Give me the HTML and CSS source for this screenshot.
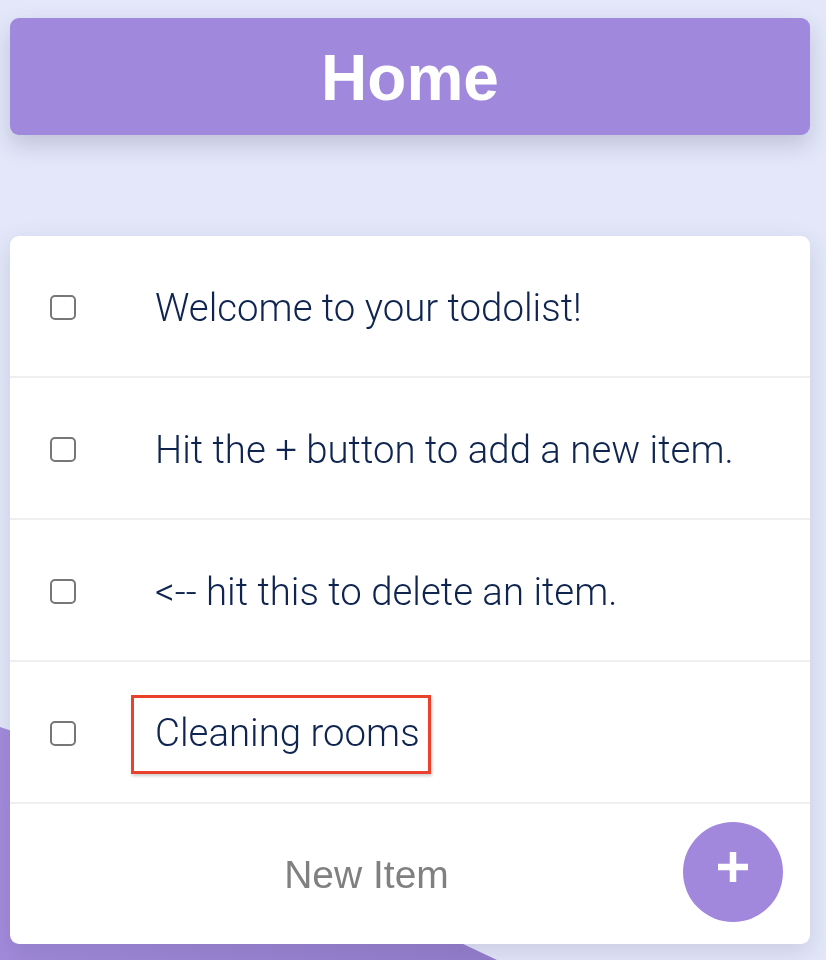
FILE: index.html
```html
<!DOCTYPE html>
<html>
<head>
<meta charset="utf-8">
<link rel="stylesheet" href="styles.css">
</head>
<body>
<div class="bg-shape"></div>
<div class="page">
  <header class="header"><h1 class="title">Home</h1></header>
  <main class="card">
    <div class="row"><span class="check"></span><span class="label">Welcome to your todolist!</span></div>
    <div class="row"><span class="check"></span><span class="label">Hit the + button to add a new item.</span></div>
    <div class="row"><span class="check"></span><span class="label">&lt;-- hit this to delete an item.</span></div>
    <div class="row"><span class="check"></span><span class="label highlight">Cleaning rooms</span></div>
    <div class="footer">
      <div class="new-item">New Item</div>
      <button class="add-btn" aria-label="add">
        <svg width="30" height="30" viewBox="0 0 30 30"><path d="M15 0V30M0 15H30" stroke="#fff" stroke-width="6.5"/></svg>
      </button>
    </div>
  </main>
</div>
</body>
</html>
```
FILE: styles.css
```css
html, body {
  margin: 0;
  padding: 0;
}
body {
  background: #e3e7f9;
  min-height: 960px;
  font-family: "Liberation Sans", Arial, sans-serif;
  overflow: hidden;
}
.bg-shape {
  position: fixed;
  left: 0;
  top: 0;
  width: 826px;
  height: 960px;
  background: linear-gradient(160deg, #a48ddc 0%, #a28bdb 75%, #8b74c3 100%);
  clip-path: polygon(0 727px, 12px 731px, 497px 960px, 0 960px);
  z-index: 0;
}
.page {
  position: relative;
  z-index: 1;
  padding: 18px 16px 0 10px;
  display: flex;
  flex-direction: column;
  gap: 101px;
}
.header {
  height: 117px;
  background: #a088dc;
  border-radius: 9px;
  display: flex;
  align-items: center;
  justify-content: center;
  box-shadow: 0 10px 22px rgba(70, 70, 110, 0.22);
}
.title {
  margin: 0;
  color: #fff;
  font-size: 64px;
  font-weight: 700;
  line-height: 1;
  position: relative;
  top: 1px;
}
.card {
  background: #fff;
  border-radius: 9px;
  box-shadow: 0 8px 24px rgba(70, 70, 110, 0.16);
  display: flex;
  flex-direction: column;
}
.row {
  height: 140px;
  border-bottom: 2px solid #efefef;
  display: flex;
  align-items: center;
  padding-left: 40px;
  gap: 79px;
}
.check {
  width: 22px;
  height: 21px;
  border: 2px solid #777;
  border-radius: 5px;
  flex: none;
  position: relative;
  top: 1px;
}
.label {
  font-family: Roboto, "Liberation Sans", sans-serif;
  font-weight: 300;
  font-size: 38.4px;
  color: #0f2550;
  position: relative;
  top: 1px;
}
.highlight {
  display: inline-block;
  line-height: 44px;
}
.highlight::after {
  content: "";
  position: absolute;
  left: -24px;
  right: -11px;
  top: -16px;
  bottom: -19px;
  border: 3px solid #e9412b;
  box-shadow: 1px 2px 3px rgba(0, 0, 0, 0.2);
}
.footer {
  height: 140px;
  display: flex;
  align-items: center;
  padding-right: 27px;
}
.new-item {
  flex: 1;
  padding-left: 40px;
  text-align: center;
  font-size: 39px;
  color: #808080;
  position: relative;
  top: 1px;
}
.add-btn {
  width: 100px;
  height: 100px;
  border-radius: 50%;
  border: none;
  background: #a288dd;
  display: flex;
  align-items: center;
  justify-content: center;
  padding: 0 0 10px 0;
  flex: none;
  position: relative;
  top: -2px;
}
```
